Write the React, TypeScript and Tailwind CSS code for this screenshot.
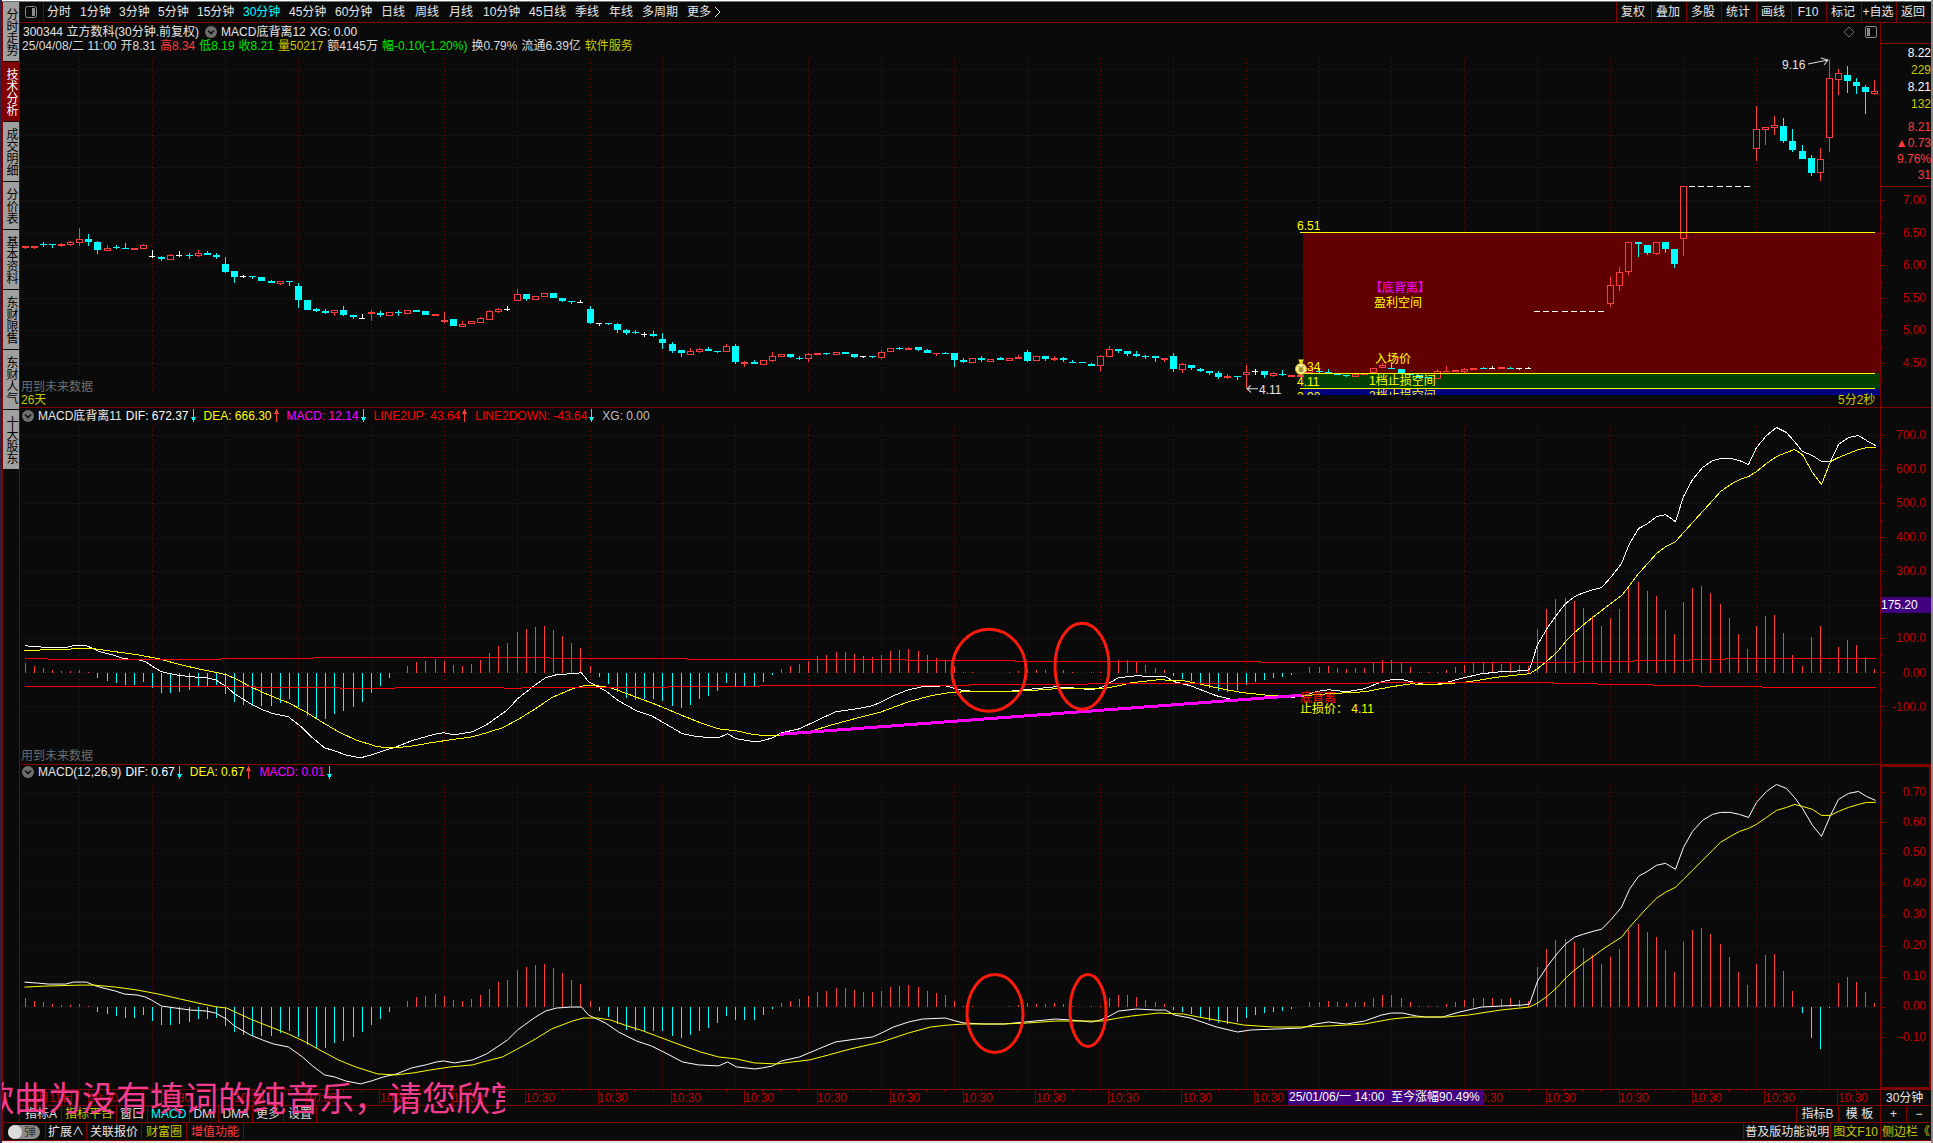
import type { CSSProperties, ReactNode } from "react";

type Frame = { x: number; y: number; w: number; h: number };
type Point = [number, number];
type Candle = [string, number, number, number, number];

const PRICE: Frame = { x: 20, y: 23, w: 1860, h: 384 };
const MACD_A: Frame = { x: 20, y: 408, w: 1860, h: 355 };
const MACD_B: Frame = { x: 20, y: 764, w: 1860, h: 325 };
const TIME: Frame = { x: 20, y: 1089, w: 1860, h: 16 };

const barX = (i: number) => Math.round(24.5 + 9.113 * i);
const DAY_BARS = Array.from({ length: 25 }, (_, k) => barX(6 + 8 * k));

const RED = "#ff3c3c";
const CYAN = "#00ffff";
const GRID = "#800000";

// kind, high, body top, body bottom, low
const CANDLES: Candle[] = [
  ["r", 246, 246, 248, 249], ["r", 246, 246, 248, 249], ["c", 242, 244, 245, 247], ["c", 244, 244, 245, 248],
  ["r", 243, 244, 246, 247], ["r", 241, 242, 245, 246], ["r", 228, 239, 243, 246], ["c", 234, 239, 242, 246],
  ["c", 241, 242, 250, 254], ["r", 245, 248, 251, 251], ["c", 245, 247, 248, 249], ["c", 243, 248, 249, 249],
  ["r", 248, 248, 250, 250], ["r", 244, 245, 249, 249], ["w", 250, 256, 257, 258], ["c", 256, 257, 259, 261],
  ["r", 254, 255, 260, 260], ["w", 251, 255, 256, 257], ["c", 253, 255, 256, 259], ["r", 250, 253, 256, 257],
  ["c", 251, 253, 255, 255], ["c", 253, 255, 257, 259], ["c", 257, 264, 272, 273], ["c", 271, 271, 277, 283],
  ["w", 275, 276, 277, 278], ["c", 276, 276, 277, 279], ["c", 277, 277, 281, 281], ["c", 280, 281, 283, 283],
  ["r", 281, 281, 284, 285], ["c", 281, 281, 282, 286], ["c", 283, 286, 300, 308], ["c", 300, 300, 310, 310],
  ["c", 308, 309, 311, 312], ["c", 309, 311, 313, 314], ["r", 310, 310, 313, 316], ["c", 306, 310, 315, 316],
  ["c", 315, 315, 317, 319], ["w", 314, 318, 319, 319], ["r", 310, 312, 314, 321], ["c", 311, 313, 315, 317],
  ["r", 312, 312, 316, 316], ["c", 310, 312, 313, 316], ["r", 310, 310, 314, 314], ["c", 310, 310, 312, 312],
  ["c", 311, 311, 315, 315], ["r", 314, 314, 316, 316], ["r", 312, 320, 322, 323], ["c", 319, 319, 326, 326],
  ["r", 321, 324, 327, 327], ["r", 321, 321, 324, 324], ["r", 317, 318, 323, 323], ["r", 310, 311, 320, 320],
  ["r", 308, 309, 312, 313], ["w", 306, 309, 310, 311], ["r", 289, 294, 301, 301], ["c", 294, 294, 299, 301],
  ["r", 296, 296, 300, 300], ["r", 293, 293, 297, 297], ["c", 293, 293, 298, 298], ["c", 298, 298, 301, 302],
  ["c", 301, 301, 302, 304], ["w", 300, 302, 303, 303], ["c", 306, 309, 323, 324], ["w", 323, 323, 324, 326],
  ["c", 323, 323, 324, 325], ["c", 323, 324, 330, 333], ["c", 329, 330, 333, 335], ["c", 330, 332, 333, 334],
  ["w", 332, 334, 335, 337], ["c", 331, 334, 336, 337], ["c", 333, 339, 343, 349], ["c", 342, 344, 351, 353],
  ["c", 350, 350, 353, 357], ["r", 348, 351, 355, 355], ["r", 348, 349, 352, 353], ["c", 347, 349, 351, 351],
  ["c", 351, 351, 352, 353], ["r", 344, 346, 352, 352], ["c", 344, 346, 362, 364], ["r", 361, 362, 364, 367],
  ["c", 360, 362, 364, 364], ["r", 360, 360, 365, 365], ["r", 352, 356, 361, 362], ["r", 354, 354, 357, 357],
  ["c", 354, 354, 357, 358], ["c", 356, 358, 359, 360], ["r", 353, 354, 359, 362], ["r", 353, 353, 355, 355],
  ["c", 353, 353, 354, 355], ["r", 352, 352, 355, 355], ["c", 352, 352, 354, 354], ["c", 354, 354, 357, 358],
  ["w", 356, 356, 357, 358], ["c", 356, 356, 357, 358], ["r", 350, 352, 358, 359], ["r", 348, 348, 352, 352],
  ["c", 347, 348, 349, 350], ["r", 347, 348, 350, 350], ["c", 347, 347, 350, 351], ["c", 349, 350, 353, 353],
  ["r", 353, 353, 354, 356], ["c", 352, 353, 354, 354], ["c", 353, 353, 360, 367], ["c", 358, 360, 362, 363],
  ["r", 358, 358, 363, 363], ["c", 356, 358, 360, 362], ["r", 359, 359, 362, 362], ["c", 357, 358, 360, 360],
  ["r", 358, 358, 361, 361], ["r", 355, 357, 359, 359], ["c", 350, 352, 361, 362], ["r", 356, 356, 361, 361],
  ["c", 356, 356, 359, 361], ["r", 356, 358, 360, 361], ["c", 357, 358, 360, 362], ["c", 360, 362, 363, 363],
  ["c", 362, 362, 363, 363], ["c", 363, 364, 366, 366], ["r", 355, 356, 366, 371], ["r", 346, 349, 357, 357],
  ["c", 349, 349, 351, 353], ["c", 351, 351, 354, 356], ["c", 351, 354, 356, 357], ["c", 355, 356, 357, 359],
  ["c", 356, 356, 358, 362], ["r", 358, 358, 360, 362], ["c", 353, 356, 369, 372], ["r", 363, 364, 370, 373],
  ["c", 365, 365, 368, 370], ["c", 368, 369, 371, 372], ["c", 371, 371, 373, 375], ["c", 371, 373, 377, 379],
  ["r", 374, 376, 378, 379], ["c", 376, 376, 377, 380], ["r", 365, 372, 375, 388], ["w", 369, 371, 372, 375],
  ["c", 371, 371, 375, 378], ["r", 372, 373, 376, 377], ["c", 370, 374, 375, 376], ["r", 375, 375, 377, 377],
  ["r", 374, 375, 377, 377], ["r", 368, 368, 373, 373], ["c", 368, 371, 372, 373], ["c", 369, 372, 373, 374],
  ["c", 374, 374, 375, 375], ["c", 375, 375, 376, 377], ["r", 374, 374, 377, 377], ["r", 373, 373, 375, 375],
  ["r", 368, 368, 373, 373], ["r", 363, 365, 368, 368], ["c", 362, 368, 369, 369], ["c", 369, 369, 373, 373],
  ["c", 374, 374, 375, 375], ["c", 375, 375, 378, 378], ["c", 377, 377, 378, 378], ["r", 369, 371, 379, 379],
  ["r", 366, 371, 372, 372], ["r", 370, 370, 372, 372], ["r", 368, 369, 372, 373], ["r", 368, 368, 370, 370],
  ["c", 367, 368, 369, 369], ["w", 366, 368, 369, 369], ["r", 367, 367, 369, 369], ["c", 367, 368, 369, 369],
  ["w", 368, 368, 369, 370], ["w", 367, 368, 369, 369],
  ...Array.from({ length: 8 }, (): Candle => ["w", 311, 311, 312, 312]),
  ["r", 277, 285, 304, 307], ["r", 267, 272, 286, 291], ["r", 242, 242, 272, 275], ["c", 242, 242, 244, 257],
  ["c", 245, 245, 253, 255], ["r", 242, 242, 254, 255], ["c", 242, 242, 249, 253], ["c", 249, 249, 264, 268],
  ["r", 186, 186, 239, 256],
  ...Array.from({ length: 7 }, (): Candle => ["w", 186, 186, 187, 187]),
  ["r", 106, 129, 149, 161], ["r", 127, 127, 130, 145], ["r", 116, 125, 128, 135], ["c", 118, 126, 141, 143],
  ["c", 129, 141, 150, 152], ["c", 145, 151, 159, 159], ["c", 155, 158, 173, 176], ["r", 148, 159, 173, 181],
  ["r", 60, 78, 138, 152], ["r", 69, 73, 80, 95], ["c", 66, 75, 81, 93], ["c", 78, 82, 86, 94],
  ["c", 85, 87, 92, 114], ["r", 80, 91, 94, 95],
];

const HIST = [
  10, 7, 5, 3, 2, 2, 3, 1, -5, -8, -10, -12, -12, -9, -15, -20, -20, -19, -17, -13, -13, -12, -21, -29, -32, -33, -33,
  -33, -30, -26, -34, -43, -46, -46, -41, -38, -34, -29, -20, -13, -5, 0, 7, 11, 12, 14, 12, 8, 7, 9, 13, 20, 27, 30,
  41, 44, 46, 47, 43, 37, 30, 25, 7, -4, -11, -19, -25, -27, -26, -26, -28, -33, -35, -32, -26, -23, -18, -10, -14, -14,
  -14, -9, -2, 4, 7, 9, 12, 17, 18, 21, 21, 19, 17, 16, 18, 22, 23, 24, 22, 18, 15, 13, 7, 1, 1, 0, 0, 0, 1, 2, 4, 3, 3,
  4, 3, 1, 0, 1, 1, 10, 13, 13, 11, 8, 5, 3, -3, -6, -8, -12, -15, -18, -19, -17, -12, -9, -7, -5, -4, -2, 0, 6, 6, 7,
  5, 4, 5, 5, 10, 13, 13, 10, 6, 1, 1, 1, 3, 6, 8, 10, 10, 10, 9, 10, 8, 7, 44, 64, 74, 75, 72, 65, 57, 47, 55, 64, 85,
  91, 82, 77, 63, 39, 71, 85, 87, 80, 69, 55, 39, 24, 47, 57, 58, 40, 18, 7, 36, 47, 1, 26, 33, 28, 16, 4,
];
const HIST_B = HIST.map((v, i) => (i === 195 ? -7 : i === 196 ? -35 : i === 197 ? -47 : i === 198 ? -1 : v));

const DIF_HEAD: Point[] = [
  [24, 645], [37, 646], [48, 647], [65, 647], [73, 645], [86, 645], [93, 648], [99, 651], [115, 655], [124, 658],
  [137, 659], [145, 661], [151, 665], [161, 671], [175, 674], [190, 676], [206, 677], [215, 679], [226, 686],
  [234, 693], [250, 703], [262, 709], [273, 713], [288, 716], [302, 727], [312, 737], [324, 747], [334, 750],
  [345, 754], [360, 757], [371, 754], [383, 750], [396, 746], [411, 740], [425, 736], [436, 733], [443, 732],
  [454, 734], [472, 731], [486, 724], [507, 709], [517, 698], [535, 684], [545, 677], [556, 674], [570, 673],
  [581, 672], [588, 681], [605, 690], [618, 700], [636, 710], [651, 715], [665, 723], [682, 733], [698, 736],
  [718, 737], [727, 733], [736, 738], [754, 741], [762, 740], [772, 737], [781, 732], [799, 728], [818, 719],
  [835, 711], [856, 708], [872, 705], [881, 701], [893, 695], [908, 689], [922, 686], [945, 685], [955, 688],
  [964, 690], [984, 691], [1004, 691], [1024, 689], [1055, 686], [1071, 687], [1091, 689], [1100, 687], [1109, 682],
  [1118, 677], [1136, 675], [1156, 676], [1165, 676], [1174, 681], [1190, 685], [1216, 695], [1237, 700],
  [1250, 698], [1276, 697], [1301, 696], [1315, 691], [1328, 689], [1346, 691], [1364, 688], [1381, 681], [1391, 679],
  [1402, 679], [1416, 682], [1426, 684], [1442, 683], [1459, 678], [1481, 673], [1500, 671], [1522, 670],
  [1529, 669], [1537, 644], [1547, 627], [1557, 613], [1565, 603], [1574, 596], [1583, 592], [1593, 589],
  [1601, 587], [1610, 577], [1621, 563], [1629, 543], [1638, 528], [1647, 523], [1656, 516], [1665, 514],
  [1675, 521], [1683, 496], [1692, 479], [1702, 467], [1712, 460], [1720, 458], [1730, 458], [1739, 460],
  [1748, 464], [1756, 447], [1766, 435], [1776, 427], [1786, 432], [1794, 441],
];
const DIF_TAIL: Point[] = [[1838, 444], [1848, 437], [1858, 435], [1866, 440], [1875, 445]];
const DEA_HEAD: Point[] = [
  [24, 650], [45, 649], [80, 648], [93, 648], [115, 651], [137, 654], [158, 658], [180, 664], [202, 669], [217, 672],
  [226, 674], [237, 679], [250, 686], [270, 695], [288, 702], [305, 711], [321, 721], [338, 731], [355, 739],
  [377, 746], [395, 747], [413, 745], [430, 742], [450, 739], [472, 736], [486, 732], [502, 727], [517, 719],
  [535, 708], [551, 697], [572, 688], [583, 685], [597, 685], [610, 687], [624, 692], [640, 698], [656, 704],
  [680, 714], [700, 722], [718, 728], [736, 730], [754, 734], [776, 735], [792, 733], [809, 731], [828, 725],
  [850, 719], [881, 711], [908, 701], [930, 695], [948, 692], [964, 691], [1002, 691], [1027, 690], [1055, 688],
  [1102, 688], [1118, 685], [1131, 682], [1158, 679], [1183, 680], [1198, 683], [1221, 688], [1243, 692],
  [1272, 695], [1301, 695], [1328, 693], [1364, 691], [1391, 686], [1411, 683], [1426, 684], [1446, 683],
  [1468, 681], [1500, 676], [1529, 673], [1537, 668], [1547, 660], [1557, 651], [1565, 641], [1574, 632],
  [1583, 624], [1593, 616], [1601, 610], [1610, 603], [1621, 595], [1629, 585], [1638, 573], [1647, 563],
  [1656, 553], [1665, 546], [1675, 541], [1683, 532], [1692, 522], [1702, 511], [1712, 500], [1720, 491],
  [1730, 484], [1739, 479], [1748, 476], [1756, 471], [1766, 463], [1776, 456], [1786, 452], [1794, 449],
];
const DEA_TAIL: Point[] = [[1838, 457], [1848, 453], [1858, 449], [1866, 447], [1875, 447]];
const SMOOTH: Point[] = [[1802, 451], [1812, 455], [1821, 461], [1830, 461]];
const DIP: Point[] = [[1802, 454], [1812, 472], [1821, 484], [1830, 461]];

const LINE_UP: Point[] = [
  [24, 658], [47, 658], [48, 659], [220, 659], [221, 658], [312, 658], [313, 657], [549, 657], [550, 658], [686, 658],
  [687, 659], [904, 659], [905, 660], [1014, 660], [1015, 661], [1260, 661], [1261, 662], [1578, 662], [1579, 661],
  [1633, 661], [1634, 660], [1688, 660], [1689, 659], [1724, 659], [1725, 658], [1875, 658],
];
const LINE_DOWN: Point[] = [
  [24, 686], [254, 686], [255, 687], [339, 687], [340, 688], [394, 688], [395, 687], [503, 687], [504, 688], [521, 688],
  [522, 687], [667, 687], [668, 686], [758, 686], [759, 685], [968, 685], [969, 684], [1087, 684], [1088, 683],
  [1369, 683], [1370, 682], [1552, 682], [1553, 683], [1597, 683], [1598, 684], [1652, 684], [1653, 685], [1698, 685],
  [1699, 686], [1761, 686], [1762, 687], [1875, 687],
];

const toB = (y: number) => 1006 + (y - 672.5) * 0.909;
const pts = (list: Point[], map: (y: number) => number = (y) => y) =>
  list.map(([x, y]) => `${x + 0.5},${Math.round(map(y)) + 0.5}`).join(" ");

const place = (f: Frame, x: number, y: number): CSSProperties => ({
  left: `${((x - f.x) / f.w) * 100}%`,
  top: `${((y - f.y) / f.h) * 100}%`,
});

function Mark({ f, x, y, className, children }: { f: Frame; x: number; y: number; className: string; children: ReactNode }) {
  return (
    <span className={`absolute -translate-y-1/2 whitespace-nowrap leading-3 ${className}`} style={place(f, x, y)}>
      {children}
    </span>
  );
}

function Canvas({ f, children }: { f: Frame; children: ReactNode }) {
  return (
    <svg
      className="absolute inset-0 h-full w-full"
      viewBox={`${f.x} ${f.y} ${f.w} ${f.h}`}
      preserveAspectRatio="none"
      aria-hidden="true"
    >
      {children}
    </svg>
  );
}

function Grid({ rows, top, bottom, zero }: { rows: number[]; top: number; bottom: number; zero?: number }) {
  return (
    <g stroke={GRID} strokeWidth="1" shapeRendering="crispEdges">
      {rows.map((y) => (
        <line key={y} x1="21" x2="1879" y1={y + 0.5} y2={y + 0.5} strokeDasharray={y === zero ? "1 1" : "1 3"} />
      ))}
      {DAY_BARS.map((x) => (
        <line key={x} x1={x + 0.5} x2={x + 0.5} y1={top} y2={bottom} strokeDasharray="1 3" />
      ))}
    </g>
  );
}

function Candles() {
  return (
    <g shapeRendering="crispEdges">
      {CANDLES.map(([kind, hi, top, bot, lo], i) => {
        const x = barX(i);
        const color = kind === "r" ? RED : kind === "c" ? CYAN : "#ffffff";
        const hollow = kind === "r" && bot - top > 2;
        return (
          <g key={i} fill={color}>
            {hi < top && <rect x={x} y={hi} width="1" height={top - hi} />}
            {lo > bot && <rect x={x} y={bot} width="1" height={lo - bot} />}
            {hollow ? (
              <rect x={x - 2.5} y={top + 0.5} width="6" height={bot - top - 1} fill="none" stroke={color} />
            ) : (
              <rect x={x - 3} y={top} width={kind === "w" ? 6 : 7} height={bot - top} />
            )}
          </g>
        );
      })}
    </g>
  );
}

function Histogram({ data, zero, scale }: { data: number[]; zero: number; scale: number }) {
  return (
    <g shapeRendering="crispEdges">
      {data.map((v, i) => {
        const h = Math.round(Math.abs(v) * scale);
        if (h === 0) return null;
        return <rect key={i} x={barX(i)} y={v > 0 ? zero - h : zero} width="1" height={h} fill={v > 0 ? RED : CYAN} />;
      })}
    </g>
  );
}

function Ring({ cx, cy, rx, ry }: { cx: number; cy: number; rx: number; ry: number }) {
  return <ellipse cx={cx} cy={cy} rx={rx} ry={ry} fill="none" stroke="#ff1a0d" strokeWidth="3" />;
}

function Axis({ f, labels, thick, children }: { f: Frame; labels: [string, number][]; thick?: boolean; children?: ReactNode }) {
  const step = labels.length > 1 ? labels[1][1] - labels[0][1] : 0;
  return (
    <div className={`relative w-[51px] shrink-0 border-[#800000] ${thick ? "outline-2 -outline-offset-2 outline-[#800000] border-l" : "border-l"}`}>
      {children}
      <svg className="absolute inset-y-0 left-0 h-full w-1" viewBox={`0 ${f.y} 4 ${f.h}`} preserveAspectRatio="none" aria-hidden="true">
        <g fill="#800000" shapeRendering="crispEdges">
          {labels.map(([t, y]) => (
            <g key={t}>
              <rect x="0" y={y} width="4" height="1" />
              <rect x="0" y={Math.round(y + step / 2)} width="2" height="1" />
            </g>
          ))}
        </g>
      </svg>
      {labels.map(([t, y]) => (
        <span
          key={t}
          className="absolute right-[5px] -translate-y-1/2 leading-3 text-[#c00000]"
          style={{ top: `${((y - f.y) / f.h) * 100}%` }}
        >
          {t}
        </span>
      ))}
    </div>
  );
}

function Arrow({ up }: { up?: boolean }) {
  return (
    <svg className="mr-1.5 h-[13px] w-[9px]" viewBox="0 0 9 13" shapeRendering="crispEdges" aria-hidden="true">
      {up ? <path d="M4 0h1v2h1v2h1v1H5v8H4V5H2V4h1V2h1z" fill={RED} /> : <path d="M4 13h1v-2h1V9h1V8H5V0H4v8H2v1h1v2h1z" fill={CYAN} />}
    </svg>
  );
}

function Fold({ label }: { label: string }) {
  return (
    <button type="button" aria-label={label} className="h-3 w-3 shrink-0">
      <svg viewBox="0 0 12 12" className="h-3 w-3" aria-hidden="true">
        <circle cx="6" cy="6" r="6" fill="#6e6e6e" />
        <path d="M3 4.5 6 7.5 9 4.5" fill="none" stroke="#101010" strokeWidth="1.6" />
      </svg>
    </button>
  );
}

const SIDE = ["分时走势", "技术分析", "成交明细", "分价表", "基本资料", "东财限售", "东财人气", "十大股东"];
const PERIODS: [string, string][] = [
  ["分时", "w-[33px]"], ["1分钟", "w-[39px]"], ["3分钟", "w-[39px]"], ["5分钟", "w-[39px]"], ["15分钟", "w-[46px]"],
  ["30分钟", "w-[46px]"], ["45分钟", "w-[46px]"], ["60分钟", "w-[46px]"], ["日线", "w-[34px]"], ["周线", "w-[34px]"],
  ["月线", "w-[34px]"], ["10分钟", "w-[46px]"], ["45日线", "w-[46px]"], ["季线", "w-[34px]"], ["年线", "w-[33px]"],
  ["多周期", "w-[45px]"],
];
const TOOLS = ["复权", "叠加", "多股", "统计", "画线", "F10", "标记", "+自选", "返回"];
const STATS: [string, string][] = [
  ["25/04/08/二 11:00", "text-[#dcdcdc]"], ["开8.31", "text-[#dcdcdc]"], ["高8.34", "text-[#ff3c3c]"],
  ["低8.19", "text-[#00e600]"], ["收8.21", "text-[#00e600]"], ["量50217", "text-[#c8c800]"],
  ["额4145万", "text-[#dcdcdc]"], ["幅-0.10(-1.20%)", "text-[#00e600]"], ["换0.79%", "text-[#dcdcdc]"],
  ["流通6.39亿", "text-[#dcdcdc]"], ["软件服务", "text-[#c8c800]"],
];
const QUOTES: [string, string][] = [
  ["8.22", "h-[17px] text-white"], ["229", "h-[17px] text-[#c8c800]"], ["8.21", "h-[17px] text-white"],
  ["132", "h-[17px] text-[#c8c800]"], ["8.21", "mt-[7px] h-4 text-[#ff3c3c]"], ["▲0.73", "h-4 text-[#ff3c3c]"],
  ["9.76%", "h-4 text-[#ff3c3c]"], ["31", "h-4 text-[#ff3c3c]"],
];
const TABS: [string, string][] = [
  ["指标A", "pl-[5px] pr-1 text-[#dcdcdc]"], ["指标平台", "px-[3px] text-[#c8c800]"], ["窗口", "px-[3px] text-[#dcdcdc]"],
  ["MACD", "px-[3px] text-[#00ffff]"], ["DMI", "px-[3px] text-[#dcdcdc]"], ["DMA", "px-[3px] text-[#dcdcdc]"],
  ["更多", "px-[3px] text-[#dcdcdc]"], ["设置", "px-1 text-[#dcdcdc]"],
];

export default function App() {
  return (
    <div className="flex h-screen min-h-[700px] flex-col overflow-hidden border-x-2 border-l-[#2c2344] border-r-[#8c8c8c] bg-[#0a0a0a] font-['Liberation_Sans','Noto_Sans_CJK_SC',sans-serif] text-[12px] leading-3 text-[#e6e6e6]">
      <div className="h-0.5 shrink-0 border-b border-[#6e7a78] bg-white" />

      <div className="flex min-h-0 flex-1">
        <nav className="flex w-[18px] shrink-0 flex-col border-x border-[#800000]" aria-label="功能">
          {SIDE.map((s) => (
            <button
              key={s}
              type="button"
              className={`w-4 border-b border-[#0a0a0a] pt-1.5 pb-[5px] leading-4 [writing-mode:vertical-rl] ${
                s === "技术分析" ? "bg-[#800000] text-white" : "bg-[#a0a0a0] text-black"
              }`}
            >
              {s}
            </button>
          ))}
        </nav>

        <main className="flex min-w-0 flex-1 flex-col">
          <header className="flex h-[21px] shrink-0 items-stretch border-b border-[#800000]">
            <button type="button" aria-label="布局" className="flex w-6 items-center border-r border-[#800000] pl-[5px]">
              <svg viewBox="0 0 12 12" className="h-3 w-3" aria-hidden="true">
                <rect x="0.5" y="0.5" width="11" height="11" rx="2" fill="none" stroke="#8c8c8c" />
                <rect x="7" y="2" width="3" height="8" fill="#8c8c8c" />
              </svg>
            </button>
            <div className="flex flex-1 pl-[3px]">
              {PERIODS.map(([p, w]) => (
                <button key={p} type="button" className={`shrink-0 whitespace-nowrap text-left ${w} ${p === "30分钟" ? "text-[#00ffff]" : ""}`}>
                  {p}
                </button>
              ))}
              <button type="button" className="flex items-center whitespace-nowrap">
                更多
                <svg viewBox="0 0 10 12" className="h-3 w-2.5" aria-hidden="true">
                  <path d="M4 1 9 6 4 11" fill="none" stroke="#e6e6e6" />
                </svg>
              </button>
            </div>
            {TOOLS.map((t) => (
              <button key={t} type="button" className="w-[35px] shrink-0 whitespace-nowrap border-l border-[#800000] pr-0.5 text-center">
                {t}
              </button>
            ))}
          </header>

          <section className="flex min-h-0 grow-[385] basis-0 border-b border-[#800000]">
            <div className="relative min-w-0 flex-1 overflow-hidden">
              <Canvas f={PRICE}>
                <Grid rows={[69, 102, 135, 167, 200, 233, 265, 298, 330, 363]} top={59} bottom={395} />
                <g shapeRendering="crispEdges">
                  <rect x="1303" y="232" width="577" height="141" fill="#600000" />
                  <rect x="1303" y="373" width="577" height="16" fill="#004000" />
                  <rect x="1303" y="389" width="577" height="6" fill="#000080" />
                </g>
                <Candles />
                <g shapeRendering="crispEdges" fill="#ffff00">
                  <rect x="1300" y="232" width="575" height="1" />
                  <rect x="1300" y="373" width="575" height="1" />
                  <rect x="1300" y="388" width="575" height="1" />
                </g>
                <g fill="none" stroke="#dcdcdc">
                  <path d="M1808 64 1828 60M1821 58 1828 60 1824 65" />
                  <path d="M1247 388.500H1258M1251 385 1247 388.500 1251 392" />
                </g>
              </Canvas>
              <div className="relative flex flex-col pt-0.5">
                <div className="flex h-[14px] items-center gap-1 pl-[3px]">
                  <span className="mr-0.5">300344 立方数科(30分钟.前复权)</span>
                  <Fold label="指标菜单" />
                  <span>MACD底背离12</span>
                  <span>XG: 0.00</span>
                  <span className="ml-auto flex items-center gap-2.5 pr-[3px]">
                    <svg viewBox="0 0 12 12" className="h-3 w-3" aria-hidden="true">
                      <path d="M6 1 11 6 6 11 1 6z" fill="none" stroke="#6e6e6e" />
                    </svg>
                    <svg viewBox="0 0 12 12" className="h-3 w-3" aria-hidden="true">
                      <rect x="0.5" y="0.5" width="11" height="11" rx="1.500" fill="none" stroke="#8c8c8c" />
                      <rect x="2" y="2" width="3" height="8" fill="#8c8c8c" />
                    </svg>
                  </span>
                </div>
                <div className="flex h-[14px] items-center gap-1 pl-0.5">
                  {STATS.map(([t, c]) => (
                    <span key={t} className={c}>{t}</span>
                  ))}
                </div>
              </div>
              <Mark f={PRICE} x={1782} y={65} className="">9.16</Mark>
              <Mark f={PRICE} x={1259} y={390} className="">4.11</Mark>
              <Mark f={PRICE} x={21} y={387} className="text-[#6e6e6e]">用到未来数据</Mark>
              <Mark f={PRICE} x={21} y={400} className="text-[#c8c800]">26天</Mark>
              <Mark f={PRICE} x={1838} y={400} className="text-[#c8c800]">5分2秒</Mark>
              <div className="absolute inset-x-0 top-0 overflow-hidden" style={{ height: `${((395 - PRICE.y) / PRICE.h) * 100}%` }}>
                {(
                  [
                    [1297, 226, "6.51"], [1297, 367, "4.34"], [1297, 382, "4.11"], [1297, 397, "3.90"],
                    [1374, 303, "盈利空间"], [1375, 359, "入场价"], [1369, 381, "1档止损空间"], [1369, 396, "2档止损空间"],
                  ] as [number, number, string][]
                ).map(([x, y, t]) => (
                  <Mark key={t} f={{ ...PRICE, h: 395 - PRICE.y }} x={x} y={y} className="text-[#ffff00]">{t}</Mark>
                ))}
              </div>
              <Mark f={PRICE} x={1370} y={288} className="text-[#ff00ff]">【底背离】</Mark>
              <svg
                viewBox="0 0 14 16"
                className="absolute h-4 w-3.5"
                style={place(PRICE, 1294, 359)}
                aria-hidden="true"
              >
                <path d="M4 0.500h6L8.500 3v2h-3V3z" fill="#f0e020" />
                <circle cx="7" cy="10" r="5.500" fill="#fff2a0" stroke="#c8b400" />
                <path d="M4.500 7 7 9.500 9.500 7M7 9.500V13M4.500 10h5M4.500 12h5" fill="none" stroke="#7a6400" />
              </svg>
            </div>
            <Axis
              f={PRICE}
              labels={[["7.00", 200], ["6.50", 233], ["6.00", 265], ["5.50", 298], ["5.00", 330], ["4.50", 363]]}
            >
              <div className="mt-5 flex flex-col border-y border-[#800000] text-right">
                {QUOTES.map(([t, c], i) => (
                  <span key={i} className={`flex items-center justify-end ${c}`}>{t}</span>
                ))}
                <span className="h-[3px]" />
              </div>
            </Axis>
          </section>

          <section className="flex min-h-0 grow-[356] basis-0 border-b border-[#800000]">
            <div className="relative min-w-0 flex-1 overflow-hidden">
              <Canvas f={MACD_A}>
                <Grid rows={[435, 469, 503, 537, 571, 605, 638, 672, 706]} top={427} bottom={762} />
                <Histogram data={HIST} zero={673} scale={1} />
                <g fill="none" strokeWidth="1" shapeRendering="crispEdges">
                  <polyline points={pts([...DIF_HEAD, ...SMOOTH, ...DIF_TAIL])} stroke="#ffffff" />
                  <polyline points={pts([...DEA_HEAD, ...DIP, ...DEA_TAIL])} stroke="#ffff00" />
                  <polyline points={pts(LINE_UP)} stroke="#ff0000" />
                  <polyline points={pts(LINE_DOWN)} stroke="#ff0000" />
                  <line x1="780" y1="734" x2="1301" y2="695" stroke="#ff00ff" strokeWidth="3" />
                </g>
                <Ring cx={989} cy={670} rx={37} ry={41} />
                <Ring cx={1082} cy={666} rx={27} ry={43} />
              </Canvas>
              <div className="relative flex h-[15px] items-center pl-0.5">
                <Fold label="指标菜单" />
                <span className="mx-1">MACD底背离11</span>
                <span className="text-white">DIF: 672.37</span><Arrow />
                <span className="text-[#ffff00]">DEA: 666.30</span><Arrow up />
                <span className="text-[#ff00ff]">MACD: 12.14</span><Arrow />
                <span className="text-[#ff0000]">LINE2UP: 43.64</span><Arrow up />
                <span className="text-[#ff0000]">LINE2DOWN: -43.64</span><Arrow />
                <span className="text-[#c0c0c0]">XG: 0.00</span>
              </div>
              <Mark f={MACD_A} x={21} y={755} className="text-[#6e6e6e]">用到未来数据</Mark>
              <Mark f={MACD_A} x={1300} y={697} className="text-[#ff0000]">底背离</Mark>
              <Mark f={MACD_A} x={1300} y={708} className="text-[#ffff00]">止损价： 4.11</Mark>
            </div>
            <Axis
              f={MACD_A}
              labels={[["700.0", 435], ["600.0", 469], ["500.0", 503], ["400.0", 537], ["300.0", 571], ["100.0", 638], ["0.00", 672], ["-100.0", 706]]}
            >
              <span
                className="absolute inset-x-0 z-10 h-4 bg-[#400080] leading-4 text-white"
                style={{ top: `${((597 - MACD_A.y) / MACD_A.h) * 100}%` }}
              >
                175.20
              </span>
            </Axis>
          </section>

          <section className="flex min-h-0 grow-[325] basis-0">
            <div className="relative min-w-0 flex-1 overflow-hidden">
              <Canvas f={MACD_B}>
                <Grid rows={[791, 821, 852, 883, 914, 945, 976, 1006, 1037]} top={783} bottom={1088} zero={1006} />
                <Histogram data={HIST_B} zero={1006} scale={0.909} />
                <g fill="none" strokeWidth="1" shapeRendering="crispEdges">
                  <polyline points={pts([...DIF_HEAD, ...DIP, ...DIF_TAIL], toB)} stroke="#ffffff" />
                  <polyline points={pts([...DEA_HEAD, ...SMOOTH, ...DEA_TAIL], toB)} stroke="#ffff00" />
                </g>
                <Ring cx={995} cy={1013} rx={28} ry={39} />
                <Ring cx={1088} cy={1010} rx={18} ry={36} />
              </Canvas>
              <div className="relative flex h-[15px] items-center pl-0.5">
                <Fold label="指标菜单" />
                <span className="mx-1">MACD(12,26,9)</span>
                <span className="text-white">DIF: 0.67</span><Arrow />
                <span className="text-[#ffff00]">DEA: 0.67</span><Arrow up />
                <span className="text-[#ff00ff]">MACD: 0.01</span><Arrow />
              </div>
            </div>
            <Axis
              thick
              f={MACD_B}
              labels={[["0.70", 791], ["0.60", 821], ["0.50", 852], ["0.40", 883], ["0.30", 914], ["0.20", 945], ["0.10", 976], ["0.00", 1006], ["-0.10", 1037]]}
            />
          </section>

          <div className="flex h-4 shrink-0">
            <div className="relative min-w-0 flex-1 overflow-hidden">
              <Canvas f={TIME}>
                <g fill="#800000" shapeRendering="crispEdges">
                  <rect x="20" y="1089" width="1860" height="1" />
                  {Array.from({ length: 101 }, (_, k) => (
                    <rect key={k} x={Math.round(33 + 18.226 * k)} y="1089" width="1" height={k % 4 === 3 ? 16 : 3} />
                  ))}
                </g>
              </Canvas>
              <Mark f={TIME} x={24} y={1098} className="text-[#c00000]">12月11日</Mark>
              {Array.from({ length: 25 }, (_, k) => (
                <Mark key={k} f={TIME} x={Math.round(88 + 72.904 * k)} y={1098} className="text-[#c00000]">10:30</Mark>
              ))}
              <span
                className="absolute bottom-0 h-[15px] w-[196px] whitespace-nowrap bg-[#400080] pl-px leading-[15px] text-white"
                style={{ left: `${((1288 - TIME.x) / TIME.w) * 100}%` }}
              >
                25/01/06/一 14:00&nbsp; 至今涨幅90.49%
              </span>
            </div>
            <div className="flex w-[51px] shrink-0 items-center border-l border-t border-[#800000] pl-[5px]">30分钟</div>
          </div>

          <div className="flex h-[17px] shrink-0 border-t border-[#800000]">
            {TABS.map(([t, c]) => (
              <button key={t} type="button" className={`shrink-0 border-r border-[#800000] ${c}`}>{t}</button>
            ))}
            <button type="button" className="ml-auto w-[42px] border-l border-[#800000]">指标B</button>
            <button type="button" className="w-[42px] border-l border-[#800000]">模 板</button>
            <button type="button" aria-label="放大" className="w-[26px] border-l border-[#800000]">+</button>
            <button type="button" aria-label="缩小" className="w-[25px] border-l border-[#800000]">−</button>
          </div>
        </main>
      </div>

      <footer className="relative flex h-[19px] shrink-0 border-y border-l border-[#800000]">
        <label className="flex w-[43px] items-center border-r border-[#800000] pl-[5px]">
          <input type="checkbox" className="sr-only" aria-label="弹幕" />
          <span className="flex h-3.5 w-8 items-center rounded-full bg-[#8c8c8c]">
            <span className="h-3.5 w-3.5 rounded-full bg-[#dcdcdc]" />
            <span className="pl-0.5 text-[#333333]">弹</span>
          </span>
        </label>
        <button type="button" className="w-[41px] border-r border-[#800000]">扩展∧</button>
        <button type="button" className="border-r border-[#800000] px-[3px]">关联报价</button>
        <button type="button" className="border-r border-[#800000] px-1 text-[#c8c800]">财富圈</button>
        <button type="button" className="border-r border-[#800000] px-1 text-[#ff3c3c]">增值功能</button>
        <button type="button" className="ml-auto border-l border-[#800000] px-px">普及版功能说明</button>
        <button type="button" className="border-l border-[#800000] px-0.5 text-[#c8c800]">图文F10</button>
        <button type="button" className="w-[51px] overflow-hidden whitespace-nowrap border-l border-[#800000] pl-px text-left text-[#c8c800]">侧边栏《</button>

        <div className="pointer-events-none absolute -left-[3px] bottom-[19px] h-11 w-[505px] overflow-hidden whitespace-nowrap">
          <span className="-ml-5 block text-[34px] font-normal leading-[44px] text-[#f53c90]">歌曲为没有填词的纯音乐，请您欣赏</span>
        </div>
      </footer>
      <div className="h-0.5 shrink-0 bg-[#e6e6e6]" />
    </div>
  );
}
